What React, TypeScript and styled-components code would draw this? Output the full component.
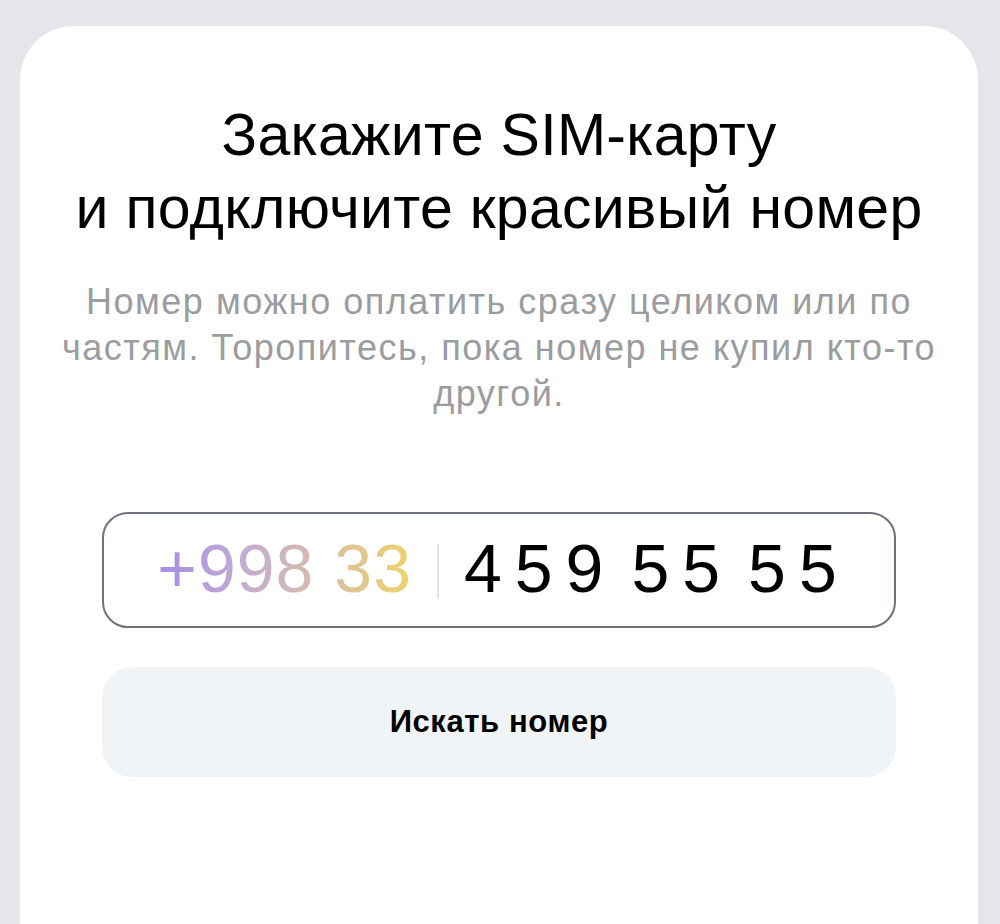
import styled, { createGlobalStyle } from "styled-components";

const GlobalStyle = createGlobalStyle`
  html, body {
    margin: 0;
    padding: 0;
    background: #e5e6ea;
    font-family: "Liberation Sans", Arial, sans-serif;
  }
`;

const Page = styled.div`
  min-height: 924px;
  padding: 26px 22px 0 20px;
  box-sizing: border-box;
  display: flex;
`;

const Card = styled.div`
  flex: 1;
  background: #fff;
  border-radius: 54px 54px 0 0;
  display: flex;
  flex-direction: column;
  align-items: center;
  padding: 73px 0 0;
`;

const Title = styled.h1`
  margin: 0;
  font-weight: 400;
  font-size: 59px;
  line-height: 73px;
  color: #000;
  text-align: center;
  letter-spacing: 0.3px;
`;

const Subtitle = styled.p`
  margin: 34px 0 0;
  width: 900px;
  font-size: 36px;
  line-height: 46px;
  color: #9b9ca0;
  text-align: center;
  letter-spacing: 1.5px;
`;

const PhoneField = styled.div`
  margin-top: 95px;
  width: 794px;
  height: 116px;
  box-sizing: border-box;
  border: 2px solid #6d727b;
  border-radius: 26px;
  display: flex;
  align-items: center;
  justify-content: center;
  gap: 25px;
  font-size: 68px;
  padding: 0 0 4px 9px;
`;

const Prefix = styled.span`
  background: linear-gradient(90deg, #a58ce6 0%, #c3aed0 35%, #d6bcab 62%, #ecd46a 100%);
  -webkit-background-clip: text;
  background-clip: text;
  color: transparent;
  letter-spacing: 1px;
`;

const Divider = styled.span`
  width: 2px;
  height: 55px;
  margin-top: 6px;
  background: #e4e4e4;
`;

const Number = styled.span`
  display: flex;
  gap: 15px;
  color: #000;
`;

const Group = styled.span`
  letter-spacing: 13px;
`;

const SearchButton = styled.button`
  margin-top: 39px;
  width: 794px;
  height: 110px;
  border: none;
  border-radius: 30px;
  background: #f1f4f6;
  font-family: inherit;
  font-size: 31px;
  font-weight: 700;
  color: #000;
  letter-spacing: 0.6px;
  cursor: pointer;
`;

export default function App() {
  const groups = ["459", "55", "55"];
  return (
    <>
      <GlobalStyle />
      <Page>
        <Card>
          <Title>
            Закажите SIM-карту
            <br />
            и подключите красивый номер
          </Title>
          <Subtitle>
            Номер можно оплатить сразу целиком или по частям. Торопитесь, пока
            номер не купил кто-то другой.
          </Subtitle>
          <PhoneField>
            <Prefix>+998 33</Prefix>
            <Divider />
            <Number>
              {groups.map((g, i) => (
                <Group key={i}>{g}</Group>
              ))}
            </Number>
          </PhoneField>
          <SearchButton>Искать номер</SearchButton>
        </Card>
      </Page>
    </>
  );
}
